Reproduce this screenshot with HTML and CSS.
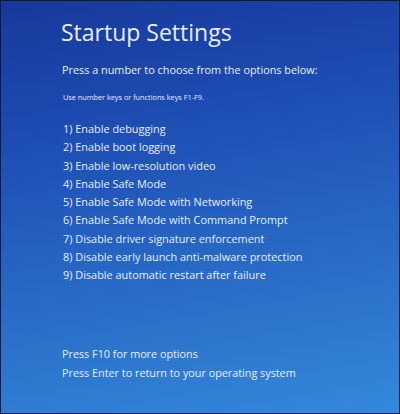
FILE: index.html
```html
<!DOCTYPE html>
<html>
<head>
<meta charset="utf-8">
<link rel="stylesheet" href="styles.css">
</head>
<body>
<div class="screen">
  <h1 class="title">Startup Settings</h1>
  <p class="lead">Press a number to choose from the options below:</p>
  <p class="hint">Use number keys or functions keys F1-F9.</p>
  <ol class="options">
    <li>1) Enable debugging</li>
    <li>2) Enable boot logging</li>
    <li>3) Enable low-resolution video</li>
    <li>4) Enable Safe Mode</li>
    <li>5) Enable Safe Mode with Networking</li>
    <li>6) Enable Safe Mode with Command Prompt</li>
    <li>7) Disable driver signature enforcement</li>
    <li>8) Disable early launch anti-malware protection</li>
    <li>9) Disable automatic restart after failure</li>
  </ol>
  <div class="footer">
    <p>Press F10 for more options</p>
    <p>Press Enter to return to your operating system</p>
  </div>
</div>
</body>
</html>
```

FILE: styles.css
```css
html, body {
  margin: 0;
  padding: 0;
}
body {
  width: 400px;
  height: 414px;
  overflow: hidden;
  background: #0b1a3c;
}
.screen {
  box-sizing: border-box;
  width: 398px;
  height: 412px;
  margin: 1px;
  padding: 16px 0 0 60px;
  background: linear-gradient(170deg, #18389a 0%, #1d4db3 30%, #2767c4 60%, #3489da 100%);
  color: #e8eefa;
  font-family: "Open Sans", "Noto Sans", sans-serif;
  display: flex;
  flex-direction: column;
}
.title {
  margin: 0;
  font-weight: 400;
  font-size: 23px;
  line-height: 30px;
}
.lead {
  margin: 14px 0 0 1px;
  font-size: 10.85px;
  line-height: 18px;
}
.hint {
  margin: 12px 0 0 2px;
  font-size: 7.3px;
  line-height: 12px;
}
.options {
  list-style: none;
  margin: 17px 0 0 2px;
  padding: 0;
  font-size: 10.9px;
  line-height: 18.3px;
}
.footer {
  margin-top: 59px;
  margin-left: 1px;
  font-size: 10.8px;
  line-height: 19px;
}
.footer p {
  margin: 0;
}
```
